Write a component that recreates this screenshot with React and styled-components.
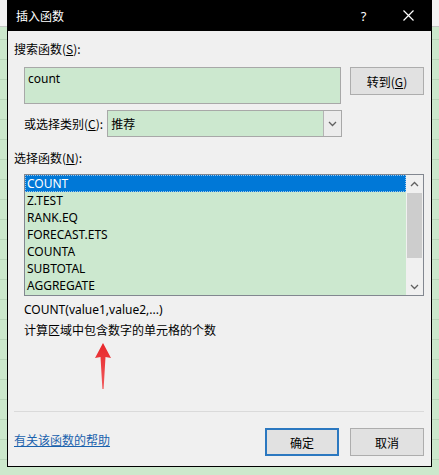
import React from "react";
import styled, { createGlobalStyle } from "styled-components";

const GlobalStyle = createGlobalStyle`
  html, body {
    margin: 0;
    padding: 0;
  }
  body {
    font-family: "Noto Sans", "Noto Sans CJK SC", sans-serif;
    font-size: 12px;
    color: #000;
  }
`;

// spreadsheet peeking out behind the dialog
const Page = styled.div`
  width: 439px;
  height: 475px;
  overflow: hidden;
  padding-left: 7px;
  box-sizing: border-box;
  background:
    linear-gradient(#f3f3f3, #f3f3f3) top / 100% 26px no-repeat,
    linear-gradient(#c6c6c6, #c6c6c6) 0 26px / 100% 1px no-repeat,
    repeating-linear-gradient(
      to bottom,
      #cce8cc 0px,
      #cce8cc 19px,
      #b9d6b9 19px,
      #b9d6b9 20px
    );
`;

const Dialog = styled.div`
  width: 425px;
  height: 467px;
  box-sizing: border-box;
  background: #f0f0f0;
  border: 1px solid #000;
  border-top: none;
  display: flex;
  flex-direction: column;
`;

const TitleBar = styled.div`
  height: 31px;
  background: #000;
  color: #fff;
  display: flex;
  align-items: center;
  padding-left: 8px;
  font-family: "Noto Sans CJK SC", sans-serif;
  font-size: 12px;
`;

const TitleText = styled.span`
  flex: 1;
`;

const TitleButton = styled.div`
  width: 45px;
  height: 31px;
  display: flex;
  align-items: center;
  justify-content: center;
  font-family: "Noto Sans", sans-serif;
  font-size: 13px;
`;

const Body = styled.div`
  flex: 1;
  display: flex;
  flex-direction: column;
  padding: 9px 7px 9px 6px;
`;

const Label = styled.div`
  height: 17px;
  line-height: 17px;
  font-family: "Noto Sans CJK SC", sans-serif;
  margin-top: ${(p) => p.$top || 0}px;
  u {
    text-decoration: underline;
  }
`;

const SearchRow = styled.div`
  display: flex;
  align-items: flex-start;
  margin: 10px 0 0 10px;
`;

const SearchBox = styled.textarea`
  width: 317px;
  height: 37px;
  box-sizing: border-box;
  resize: none;
  margin: 0;
  padding: 2px 3px;
  border: 1px solid #a8a8a8;
  background: #cce8cf;
  font-family: "Noto Sans", sans-serif;
  font-size: 12px;
  line-height: 17px;
  color: #000;
  outline: none;
`;

const Button = styled.button`
  width: 74px;
  height: 28px;
  margin: 0 0 0 ${(p) => p.$gap || 0}px;
  padding: 0;
  box-sizing: border-box;
  background: #e1e1e1;
  border: ${(p) => (p.$primary ? "2px solid #2b78c0" : "1px solid #adadad")};
  font-family: "Noto Sans CJK SC", sans-serif;
  font-size: 12px;
  color: #000;
  u {
    text-decoration: underline;
  }
`;

const CategoryRow = styled.div`
  display: flex;
  align-items: center;
  margin: 6px 0 0 10px;
`;

const Select = styled.div`
  width: 235px;
  height: 27px;
  margin-left: 4px;
  box-sizing: border-box;
  border: 1px solid #a8a8a8;
  background: #cce8cf;
  display: flex;
  align-items: center;
  font-family: "Noto Sans CJK SC", sans-serif;
`;

const SelectValue = styled.span`
  flex: 1;
  padding-left: 3px;
`;

const SelectArrow = styled.div`
  width: 17px;
  height: 100%;
  border-left: 1px solid #b4b4b4;
  background: #ececec;
  display: flex;
  align-items: center;
  justify-content: center;
`;

const ListBox = styled.div`
  margin: 8px 0 0 10px;
  width: 400px;
  height: 122px;
  box-sizing: border-box;
  border: 1px solid #828790;
  background: #cce8cf;
  display: flex;
`;

const Rows = styled.div`
  flex: 1;
`;

const Row = styled.div`
  height: 17px;
  line-height: 17px;
  padding-left: 2px;
  box-sizing: border-box;
  background: ${(p) => (p.$selected ? "#0078d7" : "transparent")};
  color: ${(p) => (p.$selected ? "#fff" : "#000")};
  outline: ${(p) => (p.$selected ? "1px dotted #9bc6ec" : "none")};
  outline-offset: -1px;
`;

const ScrollBar = styled.div`
  width: 17px;
  background: #f0f0f0;
  display: flex;
  flex-direction: column;
`;

const ScrollArrow = styled.div`
  height: 17px;
  display: flex;
  align-items: center;
  justify-content: center;
`;

const ScrollTrack = styled.div`
  flex: 1;
  padding: 1px 1px;
`;

const Thumb = styled.div`
  height: 65px;
  background: #cdcdcd;
`;

const Description = styled.div`
  margin: 4px 0 0 10px;
  line-height: 20px;
`;

const Signature = styled.div`
  font-family: "Noto Sans", sans-serif;
`;

const Summary = styled.div`
  font-family: "Noto Sans CJK SC", sans-serif;
`;

// red marker under the description text
const Pointer = styled.svg`
  display: block;
  margin: 3px 0 0 80px;
`;

const Separator = styled.div`
  height: 1px;
  background: #dadada;
  margin-top: 22px;
`;

const Footer = styled.div`
  display: flex;
  align-items: center;
  margin-top: 16px;
`;

const HelpLink = styled.a`
  flex: 1;
  color: #1a62ad;
  text-decoration: underline;
  font-family: "Noto Sans CJK SC", sans-serif;
  padding-bottom: 6px;
  cursor: pointer;
`;

const functions = [
  "COUNT",
  "Z.TEST",
  "RANK.EQ",
  "FORECAST.ETS",
  "COUNTA",
  "SUBTOTAL",
  "AGGREGATE",
];

const Chevron = ({ up }) => (
  <svg width="9" height="6" viewBox="0 0 9 6">
    <polyline
      points={up ? "1,5 4.5,1.5 8,5" : "1,1 4.5,4.5 8,1"}
      fill="none"
      stroke="#606060"
      strokeWidth="1.3"
    />
  </svg>
);

export default function App() {
  return (
    <>
      <GlobalStyle />
      <Page>
        <Dialog>
          <TitleBar>
            <TitleText>插入函数</TitleText>
            <TitleButton>?</TitleButton>
            <TitleButton>
              <svg width="11" height="11" viewBox="0 0 11 11">
                <path d="M0.5 0.5 L10.5 10.5 M10.5 0.5 L0.5 10.5" stroke="#fff" strokeWidth="1.2" />
              </svg>
            </TitleButton>
          </TitleBar>
          <Body>
            <Label>
              搜索函数(<u>S</u>):
            </Label>
            <SearchRow>
              <SearchBox value="count" readOnly />
              <Button $gap={9}>
                转到(<u>G</u>)
              </Button>
            </SearchRow>
            <CategoryRow>
              <Label>
                或选择类别(<u>C</u>):
              </Label>
              <Select>
                <SelectValue>推荐</SelectValue>
                <SelectArrow>
                  <Chevron />
                </SelectArrow>
              </Select>
            </CategoryRow>
            <Label $top={12}>
              选择函数(<u>N</u>):
            </Label>
            <ListBox>
              <Rows>
                {functions.map((name, i) => (
                  <Row key={name} $selected={i === 0}>
                    {name}
                  </Row>
                ))}
              </Rows>
              <ScrollBar>
                <ScrollArrow>
                  <Chevron up />
                </ScrollArrow>
                <ScrollTrack>
                  <Thumb />
                </ScrollTrack>
                <ScrollArrow>
                  <Chevron />
                </ScrollArrow>
              </ScrollBar>
            </ListBox>
            <Description>
              <Signature>COUNT(value1,value2,...)</Signature>
              <Summary>计算区域中包含数字的单元格的个数</Summary>
            </Description>
            <Pointer width="18" height="46" viewBox="0 0 18 46">
              <defs>
                <linearGradient id="arrowFill" x1="0" y1="0" x2="0" y2="1">
                  <stop offset="0" stopColor="#e8262a" />
                  <stop offset="1" stopColor="#f0595b" />
                </linearGradient>
              </defs>
              <path
                d="M9 0 L17 15 L11.5 14 L9.6 46 L8.4 46 L6.5 14 L1 15 Z"
                fill="url(#arrowFill)"
              />
            </Pointer>
            <Separator />
            <Footer>
              <HelpLink>有关该函数的帮助</HelpLink>
              <Button $primary>确定</Button>
              <Button $gap={11}>取消</Button>
            </Footer>
          </Body>
        </Dialog>
      </Page>
    </>
  );
}
